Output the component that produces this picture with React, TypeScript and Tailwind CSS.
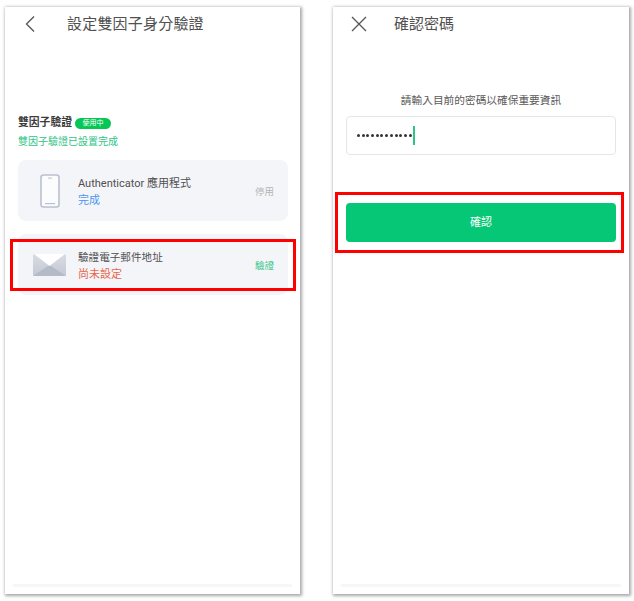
const cjk = "font-['Roboto','Noto_Sans_CJK_TC',sans-serif]"

function PhoneIcon() {
  return (
    <svg width="20" height="34" viewBox="0 0 20 34">
      <rect x="1" y="1" width="18" height="32" rx="2.5" fill="#fbfcfe" stroke="#b9c0cf" strokeWidth="1.6" />
      <rect x="8" y="3.5" width="4" height="1.2" fill="#c5cbd7" />
      <rect x="5" y="29" width="10" height="1.2" fill="#b9c0cf" />
    </svg>
  )
}

function MailIcon() {
  return (
    <svg width="33" height="22" viewBox="0 0 33 22">
      <defs>
        <linearGradient id="mailSide" x1="0" y1="0" x2="0" y2="1">
          <stop offset="0" stopColor="#d9dce4" />
          <stop offset="1" stopColor="#c3c8d3" />
        </linearGradient>
      </defs>
      <rect x="0" y="0" width="33" height="22" rx="1.5" fill="url(#mailSide)" />
      <path d="M0 22 L16.5 11 L33 22 Z" fill="#b4bac8" />
      <path d="M1 0 L32 0 L16.5 12 Z" fill="#ffffff" />
    </svg>
  )
}

function Card({ icon, title, titleSize, status, statusColor, action, actionColor }: {
  icon: React.ReactNode
  title: string
  titleSize: string
  status: string
  statusColor: string
  action: string
  actionColor: string
}) {
  return (
    <div className="flex h-[61px] items-center rounded-lg bg-[#f4f5f9] pr-[14px]">
      <div className="flex w-[60px] shrink-0 justify-center pl-[3px]">{icon}</div>
      <div className="flex-1 pt-[3px]">
        <p className={`leading-[17px] text-[#505050] ${titleSize}`}>{title}</p>
        <p className={`text-[11px] leading-[17px] ${statusColor}`}>{status}</p>
      </div>
      <span className={`pt-[3px] text-[9.5px] ${actionColor}`}>{action}</span>
    </div>
  )
}

function Screen({ children, className }: { children: React.ReactNode; className: string }) {
  return (
    <div className={`relative flex h-[587px] flex-col bg-white shadow-[1px_1px_3px_1px_rgba(0,0,0,0.35)] ${className}`}>
      {children}
      <div className="absolute bottom-[7px] left-2 right-2 h-[3px] bg-[#f7f7f7]" />
    </div>
  )
}

export default function App() {
  return (
    <div className={`flex h-[601px] w-[634px] gap-[33px] overflow-hidden bg-white pl-[5px] pt-[7px] ${cjk}`}>
      {/* Left: two factor settings */}
      <Screen className="w-[295px] shrink-0">
        <div className="flex h-[34px] items-center pl-[19px]">
          <svg width="12" height="18" viewBox="0 0 12 18" fill="none" stroke="#555" strokeWidth="1.3">
            <path d="M10 1.5 L2.5 9 L10 16.5" />
          </svg>
          <h1 className="ml-[31px] text-[15px] tracking-[0.2px] text-[#505050]">設定雙因子身分驗證</h1>
        </div>
        <div className="pl-[13px] pr-[12px] pt-[74px]">
          <div className="flex items-center gap-[3px]">
            <span className="text-[10.8px] font-bold leading-[16px] text-[#3c3c3c]">雙因子驗證</span>
            <span className="flex h-[11px] w-[36px] items-center justify-center rounded-full bg-[#06c755] text-[7px] text-white">使用中</span>
          </div>
          <p className="mt-[3px] text-[10px] leading-[16px] text-[#2fc586]">雙因子驗證已設置完成</p>
          <div className="mt-[10px] flex flex-col gap-[13px]">
            <Card icon={<PhoneIcon />} title="Authenticator 應用程式" titleSize="text-[11px]" status="完成" statusColor="text-[#4d96f0]" action="停用" actionColor="text-[#b5b5b5]" />
            <Card icon={<MailIcon />} title="驗證電子郵件地址" titleSize="text-[10.6px]" status="尚未設定" statusColor="text-[#e8654a]" action="驗證" actionColor="text-[#2fc586]" />
          </div>
        </div>
        <div className="absolute left-[5px] top-[232px] h-[52px] w-[286px] border-[3px] border-[#ff0000]" />
      </Screen>

      {/* Right: confirm password */}
      <Screen className="w-[296px] shrink-0">
        <div className="flex h-[34px] items-center pl-[18px]">
          <svg width="16" height="16" viewBox="0 0 16 16" fill="none" stroke="#555" strokeWidth="1.3">
            <path d="M1 1 L15 15 M15 1 L1 15" />
          </svg>
          <h1 className="ml-[27px] text-[15px] text-[#505050]">確認密碼</h1>
        </div>
        <div className="px-[13px] pt-[52px]">
          <p className="text-center text-[10.7px] leading-[16px] text-[#5a5a5a]">請輸入目前的密碼以確保重要資訊</p>
          <div className="mt-[7px] flex h-[39px] items-center rounded-[4px] border border-[#e6e6e6] bg-white pl-[10px]">
            <div className="flex gap-[1.7px]">
              {Array.from({ length: 12 }).map((_, i) => (
                <span key={i} className="h-[3px] w-[3px] rounded-full bg-[#333]" />
              ))}
            </div>
            <span className="ml-px h-[19px] w-[2px] bg-[#2fc586]" />
          </div>
          <button className="mt-[48px] flex h-[39px] w-full items-center justify-center rounded-[4px] bg-[#06c775] pt-[1px] text-[11px] text-white">確認</button>
        </div>
        <div className="absolute left-[2px] top-[185px] h-[61px] w-[289px] border-[3px] border-[#ff0000]" />
      </Screen>
    </div>
  )
}
